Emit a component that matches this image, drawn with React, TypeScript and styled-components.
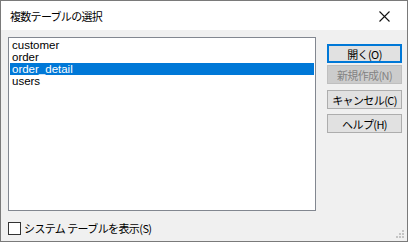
import styled, { createGlobalStyle } from "styled-components";

const GlobalStyle = createGlobalStyle`
  * { box-sizing: border-box; }
  body {
    margin: 0;
    background: #ffffff;
    font-family: "Liberation Sans", "Noto Sans CJK JP", sans-serif;
  }
`;

const tables = ["customer", "order", "order_detail", "users"];
const selected = "order_detail";

type ButtonDef = { label: string; variant?: "default" | "disabled"; gap: number };

const buttons: ButtonDef[] = [
  { label: "開く(O)", variant: "default", gap: 0 },
  { label: "新規作成(N)", variant: "disabled", gap: 2 },
  { label: "キャンセル(C)", gap: 6 },
  { label: "ヘルプ(H)", gap: 5 },
];

function App() {
  return (
    <>
      <GlobalStyle />
      <Window>
        <TitleBar>
          <Title>複数テーブルの選択</Title>
          <CloseButton>
            <svg width="11" height="11" viewBox="0 0 11 11">
              <path d="M0.5 0.5 L10.5 10.5 M10.5 0.5 L0.5 10.5" stroke="#111" strokeWidth="1.1" />
            </svg>
          </CloseButton>
        </TitleBar>
        <Body>
          <LeftColumn>
            <ListBox>
              {tables.map((t) => (
                <ListItem key={t} $selected={t === selected}>
                  {t}
                </ListItem>
              ))}
            </ListBox>
            <CheckRow>
              <CheckBox />
              <CheckLabel>システム テーブルを表示(S)</CheckLabel>
            </CheckRow>
          </LeftColumn>
          <ButtonColumn>
            {buttons.map((b) => (
              <DialogButton key={b.label} $variant={b.variant} $gap={b.gap}>
                {b.label}
              </DialogButton>
            ))}
          </ButtonColumn>
          <SizeGrip>
            <svg width="9" height="9" viewBox="0 0 9 9">
              <rect x="6" y="0" width="2" height="2" fill="#c4c4c4" />
              <rect x="3" y="3" width="2" height="2" fill="#c4c4c4" />
              <rect x="6" y="3" width="2" height="2" fill="#c4c4c4" />
              <rect x="0" y="6" width="2" height="2" fill="#c4c4c4" />
              <rect x="3" y="6" width="2" height="2" fill="#c4c4c4" />
              <rect x="6" y="6" width="2" height="2" fill="#c4c4c4" />
            </svg>
          </SizeGrip>
        </Body>
      </Window>
    </>
  );
}

export default App;

const Window = styled.div`
  width: 408px;
  height: 242px;
  border: 1px solid #7a7a7a;
  display: flex;
  flex-direction: column;
  background: #f0f0f0;
`;

const TitleBar = styled.div`
  height: 29px;
  flex-shrink: 0;
  background: #ffffff;
  display: flex;
  align-items: center;
  justify-content: space-between;
  padding: 0 0 0 9px;
`;

const Title = styled.span`
  font-family: "Noto Sans CJK JP", sans-serif;
  font-size: 11px;
  letter-spacing: -0.7px;
  color: #000000;
  margin-top: 1px;
`;

const CloseButton = styled.div`
  width: 46px;
  height: 29px;
  display: flex;
  align-items: center;
  justify-content: center;
  padding-top: 1px;
`;

const Body = styled.div`
  position: relative;
  flex: 1;
  display: flex;
  padding: 7px 5px 0 7px;
  gap: 11px;
`;

const LeftColumn = styled.div`
  display: flex;
  flex-direction: column;
  width: 309px;
`;

const ListBox = styled.div`
  height: 174px;
  background: #ffffff;
  border: 1px solid #828790;
  padding: 1px;
`;

const ListItem = styled.div<{ $selected: boolean }>`
  height: 12px;
  line-height: 12px;
  padding-left: 2px;
  font-size: 11.5px;
  color: ${(p) => (p.$selected ? "#ffffff" : "#000000")};
  background: ${(p) => (p.$selected ? "#0078d7" : "transparent")};
  white-space: nowrap;
`;

const CheckRow = styled.div`
  display: flex;
  align-items: center;
  margin-top: 11px;
  gap: 3px;
`;

const CheckBox = styled.div`
  width: 13px;
  height: 13px;
  border: 1px solid #333333;
  background: #ffffff;
`;

const CheckLabel = styled.span`
  font-family: "Noto Sans CJK JP", sans-serif;
  font-size: 11px;
  letter-spacing: -0.6px;
  color: #000000;
  line-height: 13px;
  white-space: nowrap;
`;

const ButtonColumn = styled.div`
  display: flex;
  flex-direction: column;
  padding-top: 7px;
`;

const DialogButton = styled.div<{ $variant?: "default" | "disabled"; $gap: number }>`
  width: 75px;
  height: 19px;
  margin-top: ${(p) => p.$gap}px;
  display: flex;
  align-items: center;
  justify-content: center;
  font-family: "Noto Sans CJK JP", sans-serif;
  font-size: 11px;
  letter-spacing: -0.6px;
  white-space: nowrap;
  background: ${(p) => (p.$variant === "disabled" ? "#cccccc" : "#e1e1e1")};
  color: ${(p) => (p.$variant === "disabled" ? "#838383" : "#000000")};
  border: ${(p) =>
    p.$variant === "default"
      ? "2px solid #0078d7"
      : p.$variant === "disabled"
      ? "1px solid #bfbfbf"
      : "1px solid #adadad"};
`;

const SizeGrip = styled.div`
  position: absolute;
  right: 2px;
  bottom: 2px;
  width: 9px;
  height: 9px;
  display: flex;
`;
